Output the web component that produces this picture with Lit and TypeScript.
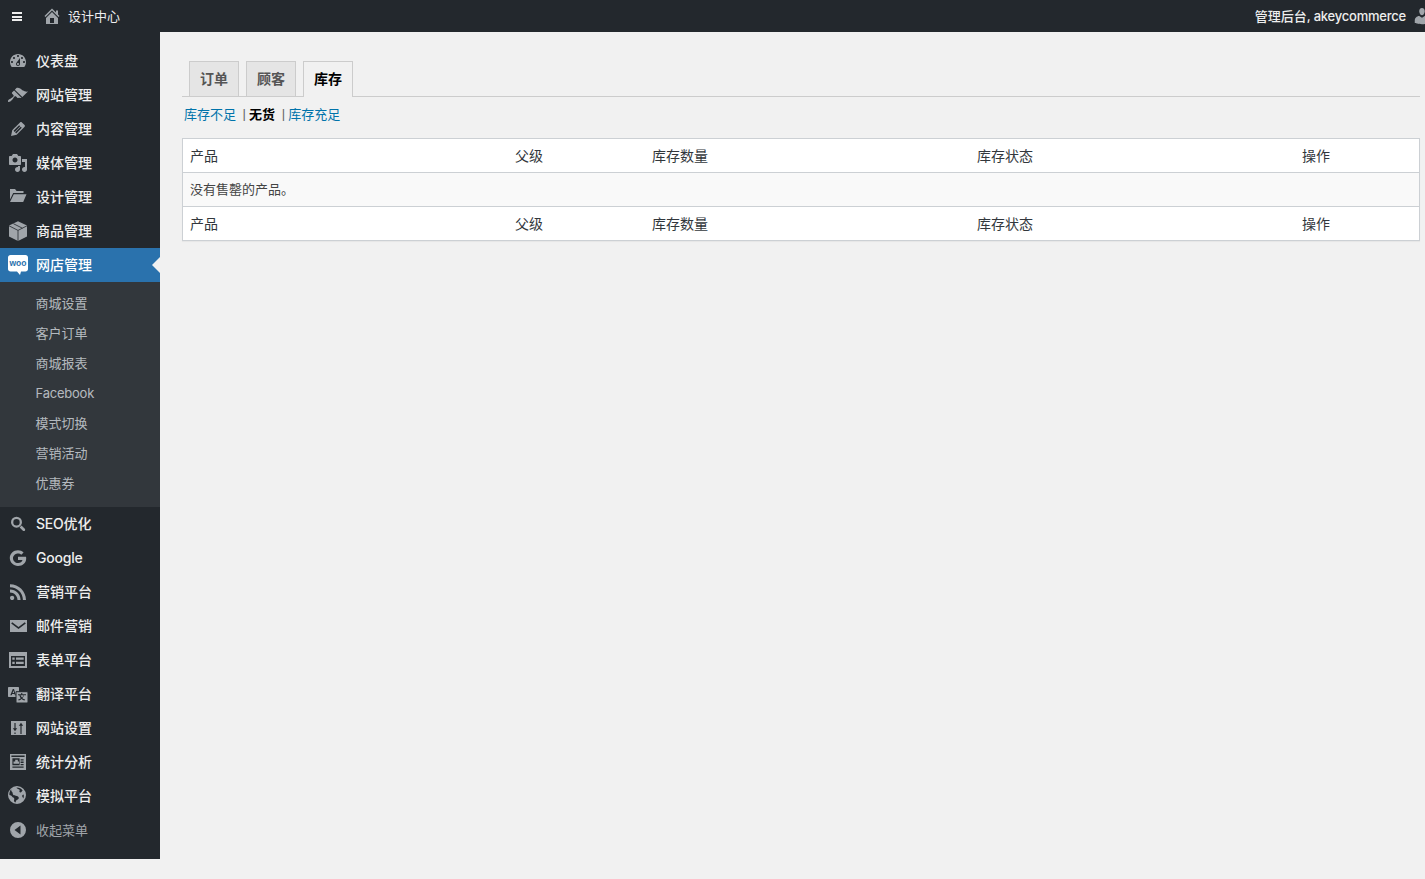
import { LitElement, html, css, svg } from "lit";
import { customElement } from "lit/decorators.js";

const I: Record<string, unknown> = {
  dash: svg`<path d="M3.76 16h12.48c1.1-1.37 1.76-3.11 1.76-5 0-4.42-3.58-8-8-8s-8 3.58-8 8c0 1.89.66 3.63 1.76 5zM10 4c.55 0 1 .45 1 1s-.45 1-1 1-1-.45-1-1 .45-1 1-1zM6 6c.55 0 1 .45 1 1s-.45 1-1 1-1-.45-1-1 .45-1 1-1zm8 0c.55 0 1 .45 1 1s-.45 1-1 1-1-.45-1-1 .45-1 1-1zm-5.37 5.55L12 7v6c0 1.1-.9 2-2 2s-2-.9-2-2c0-.57.24-1.08.63-1.45zM4 10c.55 0 1 .45 1 1s-.45 1-1 1-1-.45-1-1 .45-1 1-1zm12 0c.55 0 1 .45 1 1s-.45 1-1 1-1-.45-1-1 .45-1 1-1zm-5 3c0-.55-.45-1-1-1s-1 .45-1 1 .45 1 1 1 1-.45 1-1z"/>`,
  brush: svg`<g transform="translate(-1,.4) scale(1.06)"><path d="M14.48 11.06L7.41 3.99l1.5-1.5c.5-.56 2.3-.47 3.51.32 1.21.8 1.43 1.28 2.91 2.1 1.18.64 2.45 1.26 4.45.85zm-.71.71L6.7 4.7 4.93 6.47c-.39.39-.39 1.02 0 1.41l1.06 1.06c.39.39.39 1.03 0 1.42-.6.6-1.43 1.11-2.21 1.69-.35.26-.7.53-1.01.84C1.43 13.23.4 14.75 1.1 15.45c.7.7 2.22-.33 3.56-1.67.31-.31.58-.66.84-1.01.58-.78 1.09-1.61 1.69-2.21.39-.39 1.02-.39 1.41 0l1.06 1.06c.39.39 1.02.39 1.41 0z"/></g>`,
  edit: svg`<path d="M13.89 3.39l2.71 2.72c.46.46.42 1.24.03 1.64l-8.01 8.02-5.56 1.16 1.16-5.58s7.6-7.63 7.99-8.03c.39-.39 1.22-.39 1.68.07zm-2.73 2.79l-5.59 5.61 1.11 1.11 5.54-5.65zm-2.97 8.23l5.58-5.6-1.07-1.08-5.59 5.6z"/>`,
  media: svg`<path d="M13 11V4c0-.55-.45-1-1-1h-1.67L9 1H5L3.67 3H2c-.55 0-1 .45-1 1v7c0 .55.45 1 1 1h10c.55 0 1-.45 1-1zM7 4.5c1.38 0 2.5 1.12 2.5 2.5S8.38 9.5 7 9.5 4.5 8.38 4.5 7 5.62 4.5 7 4.5zM14 6h5v10.5c0 1.38-1.12 2.5-2.5 2.5S14 17.88 14 16.5s1.12-2.5 2.5-2.5c.17 0 .34.02.5.05V9h-3V6zm-4 8.05V13h2v3.5c0 1.38-1.12 2.5-2.5 2.5S7 17.88 7 16.5 8.12 14 9.5 14c.17 0 .34.02.5.05z"/>`,
  folder: svg`<path d="M2 2h5l1.600 2H15.500v2H5.200L2 12.500z M5.800 7.200H18.500L15.200 15H2z"/>`,
  box: svg`<path d="M10 .3 19 4.600V15.400L10 20 1 15.400V4.600z"/><path d="M1 4.800 10 9.400 19 4.800M10 9.400V20M5.400 2.700 14.400 7.200" fill="none" stroke="#23282d" stroke-width=".8"/>`,
  search: svg`<path fill-rule="evenodd" d="M8.500 2.700a5.500 5.500 0 1 1 0 11 5.500 5.500 0 0 1 0-11zm0 2.300a3.200 3.200 0 1 0 0 6.400 3.200 3.200 0 0 0 0-6.400z"/><path d="M11.600 13.400l1.900-1.900 3.300 3.300c.5.500.5 1.300 0 1.900s-1.300.5-1.900 0z"/>`,
  google: svg`<path d="M10 2.200c2.200 0 4.100.8 5.600 2.200l-2.300 2.300c-.9-.8-2-1.300-3.300-1.300-2.800 0-5 2.200-5 4.800s2.200 4.800 5 4.800c2.400 0 4-1.300 4.500-3.100H10V8.800h8c.1.5.2 1 .2 1.500 0 4.700-3.300 7.700-8.200 7.700-4.600 0-8.200-3.500-8.200-7.900S5.400 2.200 10 2.200z"/>`,
  rss: svg`<path d="M14.92 18H18C18 9.32 10.82 2.25 2 2.25v3.02c7.12 0 12.92 5.71 12.92 12.73zm-5.44 0h3.08C12.56 12.27 7.82 7.6 2 7.6v3.02c2 0 3.87.77 5.29 2.16C8.7 14.17 9.48 16.03 9.48 18zm-5.35-.02c1.17 0 2.13-.93 2.13-2.09 0-1.15-.96-2.09-2.13-2.09-1.18 0-2.13.94-2.13 2.09 0 1.16.95 2.09 2.13 2.09z"/>`,
  mail: svg`<path fill-rule="evenodd" d="M2 4h17v12H2zM4.200 6.200l-1 1.200 7.300 5.600 7.300-5.600-1-1.200-6.300 4.700z"/>`,
  form: svg`<path fill-rule="evenodd" d="M1 2h18v16H1zM3 6v10h14V6zM4.300 7.600h2.400v2.200H4.300zM8 7.600h7.700v2.200H8zM4.300 11.800h2.400V14H4.300zM8 11.800h7.700V14H8z"/>`,
  trans: svg`<g transform="translate(0,2.500)"><path fill-rule="evenodd" d="M0 1.500C0 .9.4.5 1 .5h9c.6 0 1 .4 1 1V9.500c0 .6-.4 1-1 1H1c-.6 0-1-.4-1-1zM4.800 2.500 2.300 8.800h1.400l.5-1.300h2.300L7 8.800h.8L6 2.500zM4.600 6.500 5.500 4l.6 2.500z"/></g><path stroke="#23282d" stroke-width="1" fill-rule="evenodd" d="M8 7.700h11c.4 0 1 .4 1 1V18c0 .6-.6 1-1 1H9c-.6 0-1-.4-1-1z"/><path fill="#23282d" d="M13.200 9v1.200H10v1h1.400c.3 1.200.8 2.200 1.400 3-.7.6-1.600 1-2.600 1.300l.4 1c1.200-.4 2.200-.9 3-1.600.8.700 1.800 1.200 3 1.600l.5-1c-1-.3-1.900-.7-2.700-1.300.7-.8 1.200-1.800 1.500-3H18v-1h-3.700V9zM12.500 11.200h3c-.3 1-.7 1.700-1.400 2.300-.7-.6-1.200-1.300-1.600-2.300z"/>`,
  sliders: svg`<path fill-rule="evenodd" d="M3 3h15v14H3zM6.400 5v5.200H4.800l2.200 3 2.200-3H7.600V5zM6.400 14.400V16h1.200v-1.600zM13 4.800l-2.200 3h1.600V16h1.200V7.800h1.600z"/>`,
  stats: svg`<path fill-rule="evenodd" d="M2 2h16v16H2zM3.400 3.600V5h13.200V3.600zM4.400 6.300v6.900h7.200V6.300zM7.200 7.800h2.600v1.800H11v2.200H5.500V9.600h1.700zM12.600 7.200v1.300h3V7.200zM12.600 9.600v1.300h3V9.600zM12.600 12v1.200h3V12zM4.400 14.500v1.300h11.200v-1.300z"/>`,
  globe: svg`<g transform="translate(-1,-1)"><path fill-rule="evenodd" d="M10 1a9 9 0 1 1 0 18 9 9 0 0 1 0-18zM4.200 4.200C2.800 5.800 2.200 7.800 2.400 10c1.200.2 2.200.8 2.800 1.800.5.9 1.600.7 2 1.600.4 1-.4 1.600-.2 2.600.2.8.8 1.200 1.600 1.600.3-1 .2-2 1.200-2.600.8-.6 1.800-.8 2-1.800.2-1.200-1-1.800-2-2.200-1.200-.5-2.400-.3-3.400-1-1-.8-.4-2-1.200-3-.3-.4-.7-.6-1-1.600zM9.500 2.600c.3 1 1.200 1.400 2.200 1.600 1 .2 1.200 1 .8 1.800-.5.8.2 1.400 1 1.400 1 0 1.200-1.400 2.200-1.600-1.200-2-3.400-3.200-6.200-3.200zM16.600 9.400c-.8.2-1.400.8-1.400 1.600 0 1 .8 1.600 1.200 2.400.4-1.200.6-2.600.2-4z"/></g>`,
  collapse: svg`<path fill-rule="evenodd" d="M10 2a8 8 0 1 1 0 16 8 8 0 0 1 0-16zM12.500 5.500 6.500 10l6 4.500z"/>`,
};

const top1 = [
  ["dash", "仪表盘"], ["brush", "网站管理"], ["edit", "内容管理"],
  ["media", "媒体管理"], ["folder", "设计管理"], ["box", "商品管理"],
];
const subs = ["商城设置", "客户订单", "商城报表", "Facebook", "模式切换", "营销活动", "优惠券"];
const top2 = [
  ["search", "SEO优化"], ["google", "Google"], ["rss", "营销平台"], ["mail", "邮件营销"],
  ["form", "表单平台"], ["trans", "翻译平台"], ["sliders", "网站设置"], ["stats", "统计分析"], ["globe", "模拟平台"],
];
const cols = ["产品", "父级", "库存数量", "库存状态", "操作"];

/* Latin runs are set slightly tighter than the CJK runs they sit beside. */
const label = (s: string) =>
  s.split(/([A-Za-z, ]+)/).filter(Boolean).map((p) =>
    /[A-Za-z]/.test(p) ? html`<span class="lat">${p}</span>` : p
  );

@customElement("app-root")
export class AppRoot extends LitElement {
  static styles = css`
    :host {
      display: block;
      height: 879px;
      overflow: hidden;
      background: #f1f1f1;
      font-family: Inter, "Noto Sans CJK SC", sans-serif;
      font-size: 13px;
      line-height: 18px;
      color: #444;
    }
    .lat { letter-spacing: -.22px; }
    .bar {
      height: 32px;
      background: #23282d;
      display: flex;
      align-items: center;
      justify-content: space-between;
      color: #eee;
      overflow: hidden;
    }
    .bar-left, .bar-right { display: flex; align-items: center; }
    .bar-right { font-weight: 500; }
    .burger {
      width: 10px;
      height: 9px;
      margin: 1px 0 0 12px;
      display: flex;
      flex-direction: column;
      justify-content: space-between;
    }
    .burger div { height: 2px; background: #eee; }
    .home { width: 20px; height: 20px; margin-left: 20px; margin-right: 6px; fill: #a0a5aa; }
    .avatar { width: 20px; height: 20px; margin-left: 6px; margin-right: -7px; fill: #a0a5aa; flex: none; }
    .layout { display: flex; align-items: flex-start; }
    .side {
      width: 160px;
      flex: none;
      background: #23282d;
      padding: 12px 0;
      color: #eee;
      font-size: 14px;
      font-weight: 500;
    }
    .item { height: 34px; display: flex; align-items: center; padding-left: 8px; }
    .item .ic { width: 20px; height: 20px; margin-right: 8px; fill: #a0a5aa; flex: none; }
    .item.active { background: #2a72ad; color: #fff; position: relative; }
    .item.active::after {
      content: "";
      position: absolute;
      right: 0;
      top: 9px;
      border: 8px solid transparent;
      border-right-color: #f1f1f1;
      border-left-width: 0;
    }
    .item.muted { color: #a0a5aa; font-size: 13px; font-weight: 400; }
    .woo { width: 20px; height: 20px; margin-right: 8px; flex: none; }
    .woo text { font-family: "Liberation Sans", sans-serif; font-size: 8.5px; font-weight: 700; fill: #2a72ad; }
    .sub { background: #32373c; padding: 6px 0 9px; font-size: 13px; font-weight: 400; color: rgba(240, 245, 250, .7); }
    .sub-item { height: 30px; display: flex; align-items: center; padding-left: 35.5px; }
    .main { flex: 1; min-width: 0; padding: 29px 5px 0 22px; }
    .tabs { display: flex; gap: 7px; padding-left: 7px; height: 35px; border-bottom: 1px solid #ccc; }
    .tab {
      width: 50px;
      height: 35px;
      box-sizing: border-box;
      border: 1px solid #ccc;
      border-bottom: 0;
      background: #e5e5e5;
      color: #555;
      font-size: 14px;
      font-weight: 600;
      display: flex;
      align-items: center;
      justify-content: center;
    }
    .tab.active { background: #f1f1f1; color: #000; height: 36px; padding-bottom: 1px; }
    .filters { display: flex; align-items: center; height: 18px; margin: 8px 0 15px 2px; }
    .filters .link { color: #0073aa; }
    .filters .cur { color: #000; font-weight: 600; }
    .sep { color: #666; font-family: "Liberation Sans", sans-serif; }
    .sep-a { margin: 0 3.1px 0 6.5px; }
    .sep-b { margin: 0 3px 0 6.8px; }
    .table {
      background: #fff;
      border: 1px solid #ccd0d4;
      box-shadow: 0 1px 1px rgba(0, 0, 0, .04);
    }
    .row {
      display: grid;
      grid-template-columns: 325px 137px 325px 325px 1fr;
      height: 33px;
      align-items: center;
      font-size: 14px;
      color: #32373c;
    }
    .row span { padding-left: 7px; }
    .row.empty {
      display: flex;
      box-sizing: content-box;
      background: #f9f9f9;
      font-size: 13px;
      color: #444;
      height: 31px;
      padding-bottom: 2px;
      border-top: 1px solid #ccd0d4;
      border-bottom: 1px solid #ccd0d4;
    }
  `;

  private icon(name: string) {
    return html`<svg class="ic" viewBox="0 0 20 20">${I[name]}</svg>`;
  }

  private item(e: string[]) {
    return html`<div class="item">${this.icon(e[0])}<span>${label(e[1])}</span></div>`;
  }

  private row() {
    return html`<div class="row">${cols.map((c) => html`<span>${c}</span>`)}</div>`;
  }

  render() {
    return html`
      <div class="bar">
        <div class="bar-left">
          <div class="burger"><div></div><div></div><div></div></div>
          <svg class="home" viewBox="0 0 20 20"><path d="M16 8.5l1.53 1.53-1.06 1.06L10 4.62l-6.47 6.47-1.06-1.06L10 2.5l4 4v-2h2v4zm-6-2.46l6 5.99V18H4v-5.97zM12 17v-5H8v5h4z"/></svg>
          <span>设计中心</span>
        </div>
        <div class="bar-right">
          <span>管理后台<span class="lat">, akeycommerce</span></span>
          <svg class="avatar" viewBox="0 0 20 20"><path d="M10 9.25c-2.27 0-2.73-3.44-2.73-3.44C7 4.02 7.82 2 9.97 2c2.16 0 2.98 2.02 2.71 3.81 0 0-.41 3.44-2.68 3.44zm0 2.57L12.72 10c2.39 0 4.52 2.33 4.52 4.53v2.49s-3.65 1.13-7.24 1.13c-3.65 0-7.24-1.13-7.24-1.13v-2.49c0-2.25 1.94-4.48 4.47-4.48z"/></svg>
        </div>
      </div>
      <div class="layout">
        <aside class="side">
          ${top1.map((e) => this.item(e))}
          <div class="item active">
            <svg class="woo" viewBox="0 0 20 20"><path fill="#fff" d="M2.500 0h15C18.900 0 20 1.100 20 2.500v11.500c0 1.400-1.100 2.500-2.500 2.500H13l-1 3.500-3-3.500H2.500C1.100 16.500 0 15.400 0 14V2.500C0 1.100 1.100 0 2.500 0z"/><text x="10" y="11" text-anchor="middle">woo</text></svg>
            <span>网店管理</span>
          </div>
          <div class="sub">${subs.map((s) => html`<div class="sub-item">${label(s)}</div>`)}</div>
          ${top2.map((e) => this.item(e))}
          <div class="item muted">${this.icon("collapse")}<span>收起菜单</span></div>
        </aside>
        <main class="main">
          <div class="tabs">
            <div class="tab">订单</div>
            <div class="tab">顾客</div>
            <div class="tab active">库存</div>
          </div>
          <div class="filters">
            <span class="link">库存不足</span><span class="sep sep-a">|</span><span class="cur">无货</span><span class="sep sep-b">|</span><span class="link">库存充足</span>
          </div>
          <div class="table">
            ${this.row()}
            <div class="row empty"><span>没有售罄的产品。</span></div>
            ${this.row()}
          </div>
        </main>
      </div>
    `;
  }
}
